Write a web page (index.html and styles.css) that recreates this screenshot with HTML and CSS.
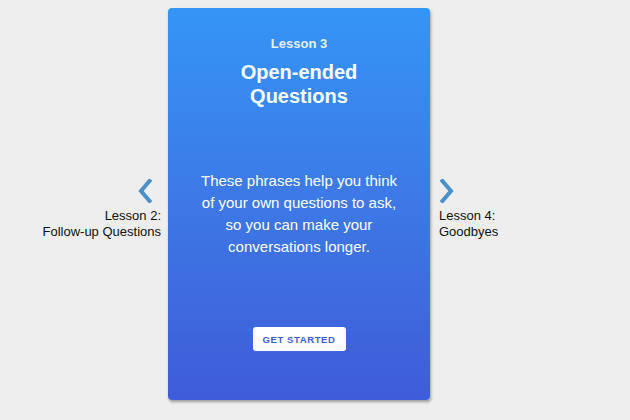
FILE: index.html
```html
<!DOCTYPE html>
<html>
<head>
<meta charset="utf-8">
<link rel="stylesheet" href="styles.css">
</head>
<body>
<div class="carousel">
  <div class="side side-prev">
    <svg class="chev" width="14" height="24" viewBox="0 0 14 24"><polyline points="11.5,2 3,12 11.5,22" fill="none" stroke="#4a90cb" stroke-width="4" stroke-linecap="square" stroke-linejoin="miter"/></svg>
    <div class="side-label">Lesson 2:<br>Follow-up Questions</div>
  </div>
  <div class="card">
    <div class="eyebrow">Lesson 3</div>
    <h1 class="title">Open-ended<br>Questions</h1>
    <p class="desc">These phrases help you think<br>of your own questions to ask,<br>so you can make your<br>conversations longer.</p>
    <button class="cta">GET STARTED</button>
  </div>
  <div class="side side-next">
    <svg class="chev" width="14" height="24" viewBox="0 0 14 24"><polyline points="2.5,2 11,12 2.5,22" fill="none" stroke="#4a90cb" stroke-width="4" stroke-linecap="square" stroke-linejoin="miter"/></svg>
    <div class="side-label">Lesson 4:<br>Goodbyes</div>
  </div>
</div>
</body>
</html>
```
FILE: styles.css
```css
html, body {
  margin: 0;
  padding: 0;
  background: #eeeeee;
  font-family: "Liberation Sans", Arial, sans-serif;
}
.carousel {
  display: flex;
  align-items: flex-start;
  padding: 8px 0 0 38px;
  height: 412px;
  box-sizing: border-box;
}
.side {
  display: flex;
  flex-direction: column;
  margin-top: 171px;
}
.side-prev {
  width: 123px;
  align-items: flex-end;
  text-align: right;
  margin-right: 7px;
}
.side-prev .chev { margin-right: 9px; }
.side-next {
  margin-left: 9px;
  align-items: flex-start;
}
.side-next .chev { margin-left: 1px; }
.side-label {
  margin-top: 5px;
  font-size: 13px;
  line-height: 16px;
  color: #111;
}
.card {
  width: 262px;
  height: 392px;
  box-sizing: border-box;
  border-radius: 4px;
  background: linear-gradient(180deg, #3595f6 0%, #3d78e6 50%, #3f5cd9 100%);
  box-shadow: 1px 2px 3px rgba(0,0,0,0.35);
  display: flex;
  flex-direction: column;
  align-items: center;
  padding-top: 28px;
  color: #fff;
  text-align: center;
}
.eyebrow {
  font-size: 13px;
  line-height: 16px;
  font-weight: bold;
  color: #e8f0fd;
}
.title {
  margin: 8px 0 0;
  font-size: 20px;
  line-height: 24px;
  font-weight: bold;
}
.desc {
  margin: 62px 0 0;
  font-size: 15px;
  line-height: 22px;
}
.cta {
  margin-top: 69px;
  height: 24px;
  width: 93px;
  padding: 0;
  border: none;
  border-radius: 3px;
  background: #fff;
  color: #3d5bd5;
  font-family: "Liberation Sans", Arial, sans-serif;
  font-size: 9.5px;
  font-weight: bold;
  letter-spacing: 0.6px;
}
```
